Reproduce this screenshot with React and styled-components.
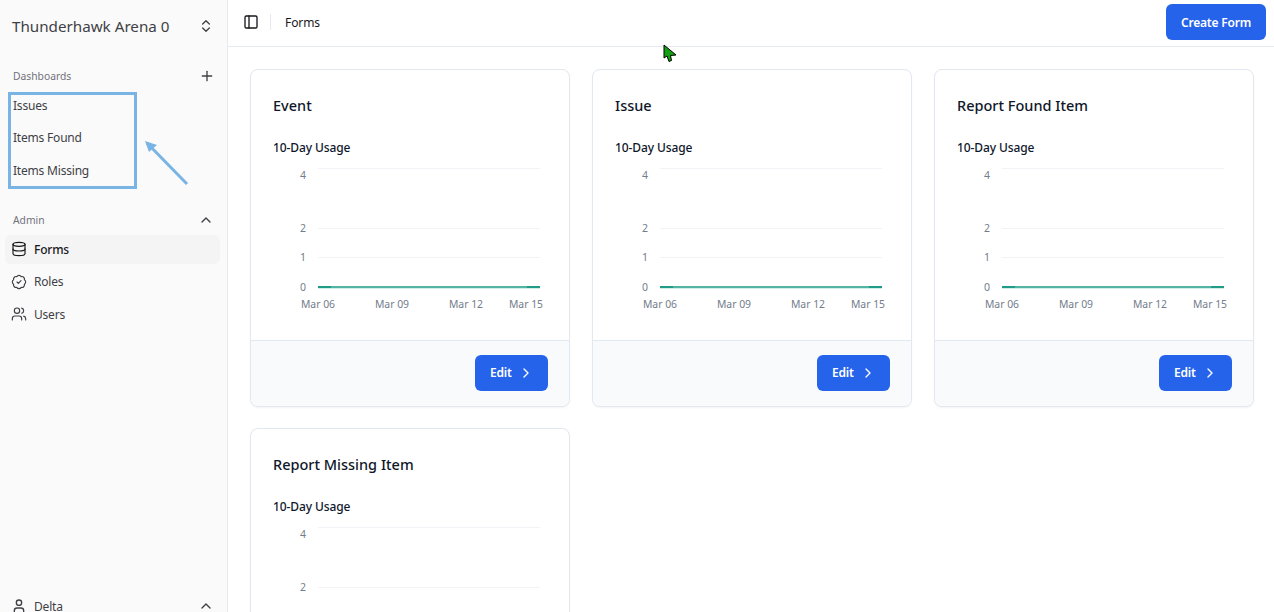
import React from 'react';
import styled, { createGlobalStyle } from 'styled-components';
import { ChevronsUpDown, Plus, ChevronUp, Database, BadgeCheck, Users, User, PanelLeft, ChevronRight } from 'lucide-react';

const forms = ['Event', 'Issue', 'Report Found Item', 'Report Missing Item'];
const dashboards = ['Issues', 'Items Found', 'Items Missing'];
const adminLinks = [
   { label: 'Forms', Icon: Database, active: true },
   { label: 'Roles', Icon: BadgeCheck },
   { label: 'Users', Icon: Users },
];

const yTicks = [
   { label: '4', line: 168, text: 175 },
   { label: '2', line: 228, text: 228 },
   { label: '1', line: 257, text: 257 },
   { label: '0', line: 287, text: 287 },
];
const xTicks = [
   { label: 'Mar 06', x: 318 },
   { label: 'Mar 09', x: 392 },
   { label: 'Mar 12', x: 466 },
   { label: 'Mar 15', x: 526 },
];

// chart coords are page coords of the first card, shifted by its inner origin
const Usage = () => (
   <ChartSvg viewBox="273 160 278 152" width="278" height="152">
      {yTicks.map((t) => (
         <g key={t.label}>
            <line x1="318" x2="540" y1={t.line + 0.5} y2={t.line + 0.5} stroke="#f1f3f6" strokeWidth="1" />
            <text x="306" y={t.text + 4} textAnchor="end" fontSize="10.5" fill="#737d8c">{t.label}</text>
         </g>
      ))}
      <line x1="318" x2="540" y1="288.5" y2="288.5" stroke="#cfeee8" strokeWidth="1" />
      <line x1="318" x2="540" y1="287" y2="287" stroke="#55b3a3" strokeWidth="2" />
      <line x1="318" x2="331" y1="287" y2="287" stroke="#1f9b87" strokeWidth="2" />
      <line x1="527" x2="540" y1="287" y2="287" stroke="#1f9b87" strokeWidth="2" />
      {xTicks.map((t) => (
         <text key={t.label} x={t.x} y="308" textAnchor="middle" fontSize="10.4" fill="#737d8c">{t.label}</text>
      ))}
   </ChartSvg>
);

const FormCard = ({ name }) => (
   <Card>
      <CardBody>
         <CardTitle>{name}</CardTitle>
         <ChartTitle>10-Day Usage</ChartTitle>
         <Usage />
      </CardBody>
      <CardFooter>
         <EditButton>
            Edit
            <ChevronRight size={16} strokeWidth={2} />
         </EditButton>
      </CardFooter>
   </Card>
);

export default function App() {
   return (
      <Page>
         <GlobalStyle />
         <Sidebar>
            <Workspace>
               <span>Thunderhawk Arena 0</span>
               <ChevronsUpDown size={16} color="#3f3f46" />
            </Workspace>

            <SectionHead>
               <span>Dashboards</span>
               <Plus size={16} color="#3f3f46" />
            </SectionHead>
            <DashList>
               {dashboards.map((d) => <DashItem key={d}>{d}</DashItem>)}
            </DashList>

            <AdminHead>
               <span>Admin</span>
               <ChevronUp size={16} color="#3f3f46" />
            </AdminHead>
            {adminLinks.map(({ label, Icon, active }) => (
               <NavItem key={label} $active={active}>
                  <Icon size={16} strokeWidth={1.75} />
                  {label}
               </NavItem>
            ))}

            <UserRow>
               <User size={16} />
               <span>Delta</span>
               <ChevronUp size={16} color="#3f3f46" />
            </UserRow>
         </Sidebar>

         <Main>
            <TopBar>
               <PanelLeft size={16} color="#18181b" />
               <Divider />
               <Crumb>Forms</Crumb>
               <CreateButton>Create Form</CreateButton>
            </TopBar>
            <Grid>
               {forms.map((f) => <FormCard key={f} name={f} />)}
            </Grid>
         </Main>

         <Highlight />
         <Arrow width="60" height="60" viewBox="0 0 60 60">
            <path d="M46 48 L6 7" stroke="#79b4e4" strokeWidth="3" fill="none" />
            <path d="M4 5 L16 9 L8 16 Z" fill="#79b4e4" />
         </Arrow>
         <Cursor width="15" height="20" viewBox="0 0 15 20">
            <path d="M1 1 L1 14 L4 12 L6 17.5 L8.5 16.5 L7.5 11.5 L13 11 Z" fill="#12a012" stroke="#000" strokeWidth="1" />
         </Cursor>
      </Page>
   );
}

const GlobalStyle = createGlobalStyle`
   html, body {
      margin: 0;
      height: 100%;
      overflow: hidden;
      background: #fff;
   }
   body {
      font-family: "Noto Sans", "Open Sans", sans-serif;
      color: #0f172a;
   }
   svg text {
      font-family: "Noto Sans", "Open Sans", sans-serif;
   }
`;

const Page = styled.div`
   display: flex;
   height: 612px;
   overflow: hidden;
   position: relative;
`;

const Sidebar = styled.aside`
   width: 228px;
   flex: none;
   box-sizing: border-box;
   background: #fafafa;
   border-right: 1px solid #e5e9f0;
   display: flex;
   flex-direction: column;
   padding: 0 7px 0 5px;
`;

const Workspace = styled.div`
   height: 52px;
   display: flex;
   align-items: center;
   justify-content: space-between;
   padding: 0 6px 0 7px;
   font-size: 15.2px;
   color: #3f3f46;
`;

const SectionHead = styled.div`
   height: 24px;
   margin-top: 12px;
   display: flex;
   align-items: center;
   justify-content: space-between;
   padding: 0 5px 0 8px;
   font-size: 10.3px;
   color: #71717a;
`;

const DashList = styled.div`
   display: flex;
   flex-direction: column;
   margin-top: 1px;
`;

const DashItem = styled.div`
   height: 32.5px;
   display: flex;
   align-items: center;
   padding-left: 8px;
   font-size: 12px;
   letter-spacing: -0.2px;
   color: #3f3f46;
`;

const AdminHead = styled(SectionHead)`
   margin-top: 21px;
   margin-bottom: 3px;
   padding-right: 6px;
`;

const NavItem = styled.div`
   height: 29px;
   margin-bottom: 3.5px;
   display: flex;
   align-items: center;
   gap: 7px;
   padding-left: 6px;
   border-radius: 6px;
   font-size: 12px;
   letter-spacing: -0.2px;
   font-weight: ${(p) => (p.$active ? 500 : 400)};
   color: ${(p) => (p.$active ? '#18181b' : '#3f3f46')};
   background: ${(p) => (p.$active ? '#f4f4f5' : 'transparent')};
`;

const UserRow = styled.div`
   height: 24px;
   margin-top: auto;
   margin-bottom: -6px;
   display: flex;
   align-items: center;
   gap: 7px;
   padding: 0 6px 0 6px;
   font-size: 12px;
   letter-spacing: -0.2px;
   color: #3f3f46;

   span {
      flex: 1;
   }
`;

const Main = styled.main`
   flex: 1;
   min-width: 0;
   display: flex;
   flex-direction: column;
`;

const TopBar = styled.header`
   height: 47px;
   flex: none;
   box-sizing: border-box;
   border-bottom: 1px solid #e5e9f0;
   display: flex;
   align-items: center;
   padding: 0 8px 2px 15px;
`;

const Divider = styled.div`
   width: 1px;
   height: 16px;
   background: #e5e9f0;
   margin: 0 14px 0 11px;
`;

const Crumb = styled.span`
   font-size: 12px;
   letter-spacing: -0.1px;
   color: #18181b;
   flex: 1;
`;

const Button = styled.button`
   border: 0;
   background: #2563eb;
   color: #fff;
   font-family: inherit;
   font-size: 12px;
   font-weight: 600;
   letter-spacing: -0.2px;
   border-radius: 6px;
   height: 36px;
   padding: 0;
   white-space: nowrap;
   display: inline-flex;
   align-items: center;
`;

const CreateButton = styled(Button)`
   width: 100px;
   justify-content: center;
`;

const EditButton = styled(Button)`
   width: 73px;
   padding-left: 15px;
   gap: 6px;
`;

const Grid = styled.div`
   display: grid;
   grid-template-columns: repeat(3, 320px);
   gap: 21px 22px;
   padding: 22px;
   align-items: start;
`;

const Card = styled.section`
   box-sizing: border-box;
   height: 338px;
   border: 1px solid #e2e8f0;
   border-radius: 8px;
   background: #fff;
   box-shadow: 0 1px 2px rgba(15, 23, 42, 0.05);
   overflow: hidden;
   display: flex;
   flex-direction: column;
`;

const CardBody = styled.div`
   flex: 1;
   padding: 23px 22px 0;
`;

const CardTitle = styled.h3`
   margin: 0;
   font-size: 14.5px;
   line-height: 24px;
   font-weight: 500;
   color: #0f172a;
`;

const ChartTitle = styled.div`
   margin-top: 21px;
   font-size: 12px;
   letter-spacing: -0.1px;
   line-height: 20px;
   font-weight: 500;
   color: #0f172a;
`;

const ChartSvg = styled.svg`
   display: block;
   margin-top: 2px;
`;

const CardFooter = styled.div`
   height: 66px;
   flex: none;
   box-sizing: border-box;
   border-top: 1px solid #e2e8f0;
   background: #f8fafc;
   display: flex;
   align-items: center;
   justify-content: flex-end;
   padding: 0 21px 2px;
`;

const Highlight = styled.div`
   position: absolute;
   left: 8px;
   top: 92px;
   width: 123px;
   height: 91px;
   border: 3px solid #79b4e4;
`;

const Arrow = styled.svg`
   position: absolute;
   left: 141px;
   top: 136px;
`;

const Cursor = styled.svg`
   position: absolute;
   left: 663px;
   top: 44px;
`;
